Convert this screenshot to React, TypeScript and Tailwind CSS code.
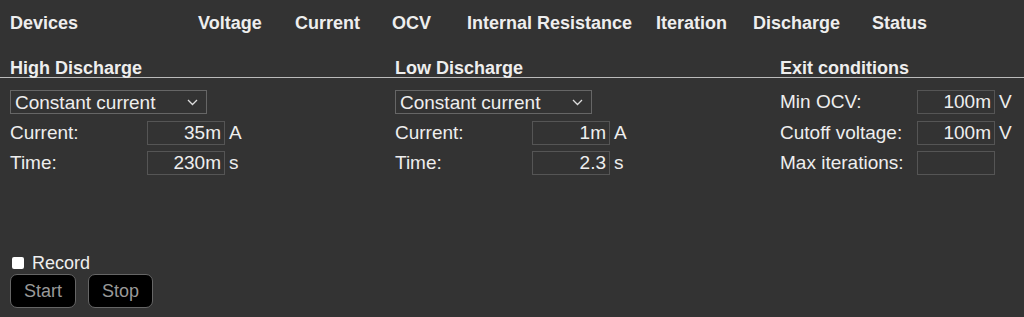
const heads = [
  { label: "Devices", w: "w-[188px]" },
  { label: "Voltage", w: "w-[97px]" },
  { label: "Current", w: "w-[97px]" },
  { label: "OCV", w: "w-[75px]" },
  { label: "Internal Resistance", w: "w-[189px]" },
  { label: "Iteration", w: "w-[97px]" },
  { label: "Discharge", w: "w-[119px]" },
  { label: "Status", w: "w-[100px]" },
];

const Field = ({ label, value, unit }: { label: string; value: string; unit?: string }) => (
  <div className="flex items-center h-[24px]">
    <span className="w-[137px]">{label}</span>
    <div className="w-[78px] h-[24px] border border-[#555] text-right pr-[3px] leading-[22px]">{value}</div>
    {unit && <span className="ml-[4px]">{unit}</span>}
  </div>
);

const Select = () => (
  <div className="w-[197px] h-[24px] mb-[1px] border border-[#666] flex items-center justify-between pl-[4px] pr-[8px]">
    <span className="leading-none">Constant current</span>
    <svg width="11" height="7" viewBox="0 0 11 7" fill="none" stroke="#ddd" strokeWidth="1.3">
      <path d="M1 1l4.5 4.5L10 1" />
    </svg>
  </div>
);

export default function App() {
  return (
    <div className="w-full h-[317px] bg-[#333333] text-[#eeeeee] text-[18px] overflow-hidden" style={{ fontFamily: '"Liberation Sans", Arial, sans-serif' }}>
      {/* header */}
      <div className="flex pl-[10px] pt-[10px] h-[45px] font-bold">
        {heads.map((h) => (
          <div key={h.label} className={`${h.w} shrink-0`}>{h.label}</div>
        ))}
      </div>

      {/* sections */}
      <div className="flex pl-[10px] border-b border-[#bbb] h-[33px] items-end leading-[18px] font-bold">
        <div className="w-[385px]">High Discharge</div>
        <div className="w-[385px]">Low Discharge</div>
        <div className="w-[200px]">Exit conditions</div>
      </div>

      <div className="flex pl-[10px] pt-[12px] text-[19px]">
        <div className="w-[385px] flex flex-col gap-[6px]">
          <Select />
          <Field label="Current:" value="35m" unit="A" />
          <Field label="Time:" value="230m" unit="s" />
        </div>
        <div className="w-[385px] flex flex-col gap-[6px]">
          <Select />
          <Field label="Current:" value="1m" unit="A" />
          <Field label="Time:" value="2.3" unit="s" />
        </div>
        <div className="flex flex-col gap-[6px]">
          <div className="mb-[1px]">
            <Field label="Min OCV:" value="100m" unit="V" />
          </div>
          <Field label="Cutoff voltage:" value="100m" unit="V" />
          <Field label="Max iterations:" value="" />
        </div>
      </div>

      <div className="pl-[10px] pt-[77px] text-[18px]">
        <label className="flex items-center gap-[8px] h-[22px]">
          <span className="ml-[2px] w-[12px] h-[12px] bg-white rounded-[2px]" />
          <span>Record</span>
        </label>
        <div className="flex gap-[12px]">
          <button className="w-[66px] h-[34px] bg-black border border-[#666] rounded-[7px] text-[#999]">Start</button>
          <button className="w-[65px] h-[34px] bg-black border border-[#666] rounded-[7px] text-[#999]">Stop</button>
        </div>
      </div>
    </div>
  );
}
